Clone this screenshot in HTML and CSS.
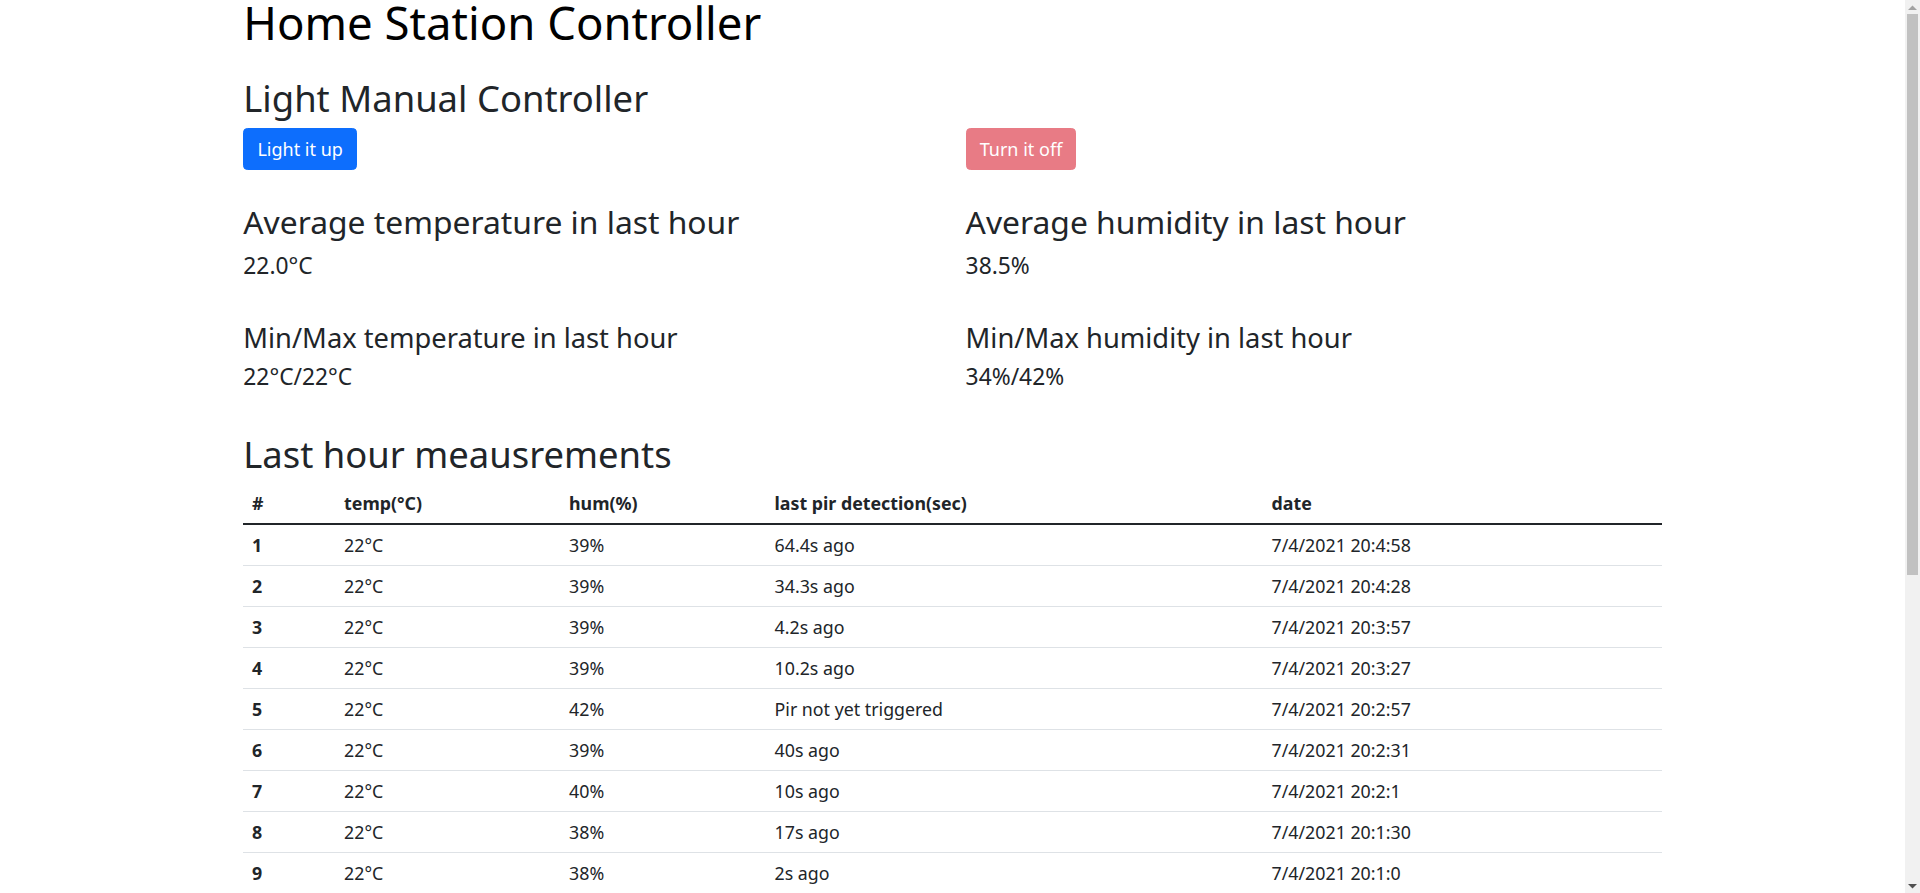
FILE: index.html
```html
<!DOCTYPE html>
<html lang="en">
<head>
<meta charset="utf-8">
<title>Home Station Controller</title>
<link rel="stylesheet" href="styles.css">
</head>
<body>
<div class="container">
  <h1 class="title">Home Station Controller</h1>
  <h2 class="section-title">Light Manual Controller</h2>
  <div class="grid-2">
    <div><button class="btn btn-primary" type="button">Light it up</button></div>
    <div><button class="btn btn-danger" type="button" disabled>Turn it off</button></div>
  </div>
  <div class="grid-2 stats">
    <div class="stat">
      <h3 class="stat-title">Average temperature in last hour</h3>
      <h5 class="stat-value">22.0°C</h5>
    </div>
    <div class="stat">
      <h3 class="stat-title">Average humidity in last hour</h3>
      <h5 class="stat-value">38.5%</h5>
    </div>
    <div class="stat">
      <h4 class="stat-subtitle">Min/Max temperature in last hour</h4>
      <h5 class="stat-value">22°C/22°C</h5>
    </div>
    <div class="stat">
      <h4 class="stat-subtitle">Min/Max humidity in last hour</h4>
      <h5 class="stat-value">34%/42%</h5>
    </div>
  </div>
  <h2 class="table-title">Last hour meausrements</h2>
  <table class="table">
    <colgroup>
      <col class="c1"><col class="c2"><col class="c3"><col class="c4"><col class="c5">
    </colgroup>
    <thead>
      <tr><th>#</th><th>temp(°C)</th><th>hum(%)</th><th>last pir detection(sec)</th><th>date</th></tr>
    </thead>
    <tbody>
      <tr><th>1</th><td>22°C</td><td>39%</td><td>64.4s ago</td><td>7/4/2021 20:4:58</td></tr>
      <tr><th>2</th><td>22°C</td><td>39%</td><td>34.3s ago</td><td>7/4/2021 20:4:28</td></tr>
      <tr><th>3</th><td>22°C</td><td>39%</td><td>4.2s ago</td><td>7/4/2021 20:3:57</td></tr>
      <tr><th>4</th><td>22°C</td><td>39%</td><td>10.2s ago</td><td>7/4/2021 20:3:27</td></tr>
      <tr><th>5</th><td>22°C</td><td>42%</td><td>Pir not yet triggered</td><td>7/4/2021 20:2:57</td></tr>
      <tr><th>6</th><td>22°C</td><td>39%</td><td>40s ago</td><td>7/4/2021 20:2:31</td></tr>
      <tr><th>7</th><td>22°C</td><td>40%</td><td>10s ago</td><td>7/4/2021 20:2:1</td></tr>
      <tr><th>8</th><td>22°C</td><td>38%</td><td>17s ago</td><td>7/4/2021 20:1:30</td></tr>
      <tr><th>9</th><td>22°C</td><td>38%</td><td>2s ago</td><td>7/4/2021 20:1:0</td></tr>
    </tbody>
  </table>
</div>
<div class="scrollbar" aria-hidden="true">
  <div class="sb-btn">
    <svg width="9" height="5" viewBox="0 0 9 5"><path d="M0 5 L4.5 0.5 L9 5 Z" fill="#a3a3a3"/></svg>
  </div>
  <div class="sb-track"><div class="sb-thumb"></div></div>
  <div class="sb-btn">
    <svg width="9" height="5" viewBox="0 0 9 5"><path d="M0 0 L4.5 4.5 L9 0 Z" fill="#505050"/></svg>
  </div>
</div>
</body>
</html>
```
FILE: styles.css
```css
* { box-sizing: border-box; }

html { font-size: 17.5px; }

body {
  margin: 0;
  padding-right: 15px;
  font-family: "Noto Sans", "Open Sans", "Liberation Sans", sans-serif;
  font-size: 17.8px;
  line-height: 1.5;
  color: #212529;
  background: #fff;
  overflow: hidden;
}

.container {
  width: 1418.4px;
  margin: 0 auto;
}

h1, h2, h3, h4, h5 {
  margin: 0;
  font-weight: 400;
}

.title {
  font-size: 45.5px;
  line-height: 44.7px;
  color: #000;
  margin-bottom: 32.5px;
}

.section-title {
  font-size: 36.4px;
  line-height: 42px;
  margin-bottom: 9.1px;
}

.grid-2 {
  display: grid;
  grid-template-columns: 1fr 1fr;
  column-gap: 26.25px;
}

.btn {
  display: inline-block;
  font-family: inherit;
  font-size: 18px;
  line-height: 26.25px;
  padding: 6.56px 13.1px;
  border: 1px solid transparent;
  border-radius: 4.4px;
  color: #fff;
  cursor: pointer;
}

.btn-primary {
  background: #0d6efd;
  border-color: #0d6efd;
}

.btn-danger {
  background: #dc3545;
  border-color: #dc3545;
}

.btn:disabled {
  opacity: 0.65;
  pointer-events: none;
}

.stats {
  margin-top: 34.6px;
  row-gap: 42.8px;
}

.stat-title {
  font-size: 31.8px;
  line-height: 36.75px;
  margin-bottom: 11.8px;
}

.stat-subtitle {
  font-size: 27.3px;
  line-height: 31.5px;
  margin-bottom: 10.9px;
}

.stat-value {
  font-size: 22.8px;
  line-height: 26.25px;
}

.table-title {
  font-size: 36.4px;
  line-height: 42px;
  margin-top: 42.1px;
  margin-bottom: 8.5px;
}

.table {
  width: 100%;
  border-collapse: collapse;
  table-layout: fixed;
  margin-bottom: 17.5px;
}

.c1 { width: 92px; }
.c2 { width: 225px; }
.c3 { width: 205.5px; }
.c4 { width: 497px; }

.table th,
.table td {
  padding: 6.9px 8.75px;
  text-align: left;
  vertical-align: top;
  border-bottom: 1px solid #dee2e6;
  line-height: 26.25px;
}

.table th { font-weight: 700; }

.table thead th {
  border-bottom: 2px solid #212529;
}

/* browser scrollbar, drawn over the right edge */
.scrollbar {
  position: fixed;
  top: 0;
  right: 0;
  width: 15px;
  height: 100vh;
  background: #f1f1f1;
  display: flex;
  flex-direction: column;
}

.sb-btn {
  height: 14px;
  display: flex;
  align-items: center;
  justify-content: center;
  flex: none;
}

.sb-track {
  flex: 1;
  padding: 0 2px 0 2px;
}

.sb-thumb {
  height: 561px;
  background: #c1c1c1;
}
```
